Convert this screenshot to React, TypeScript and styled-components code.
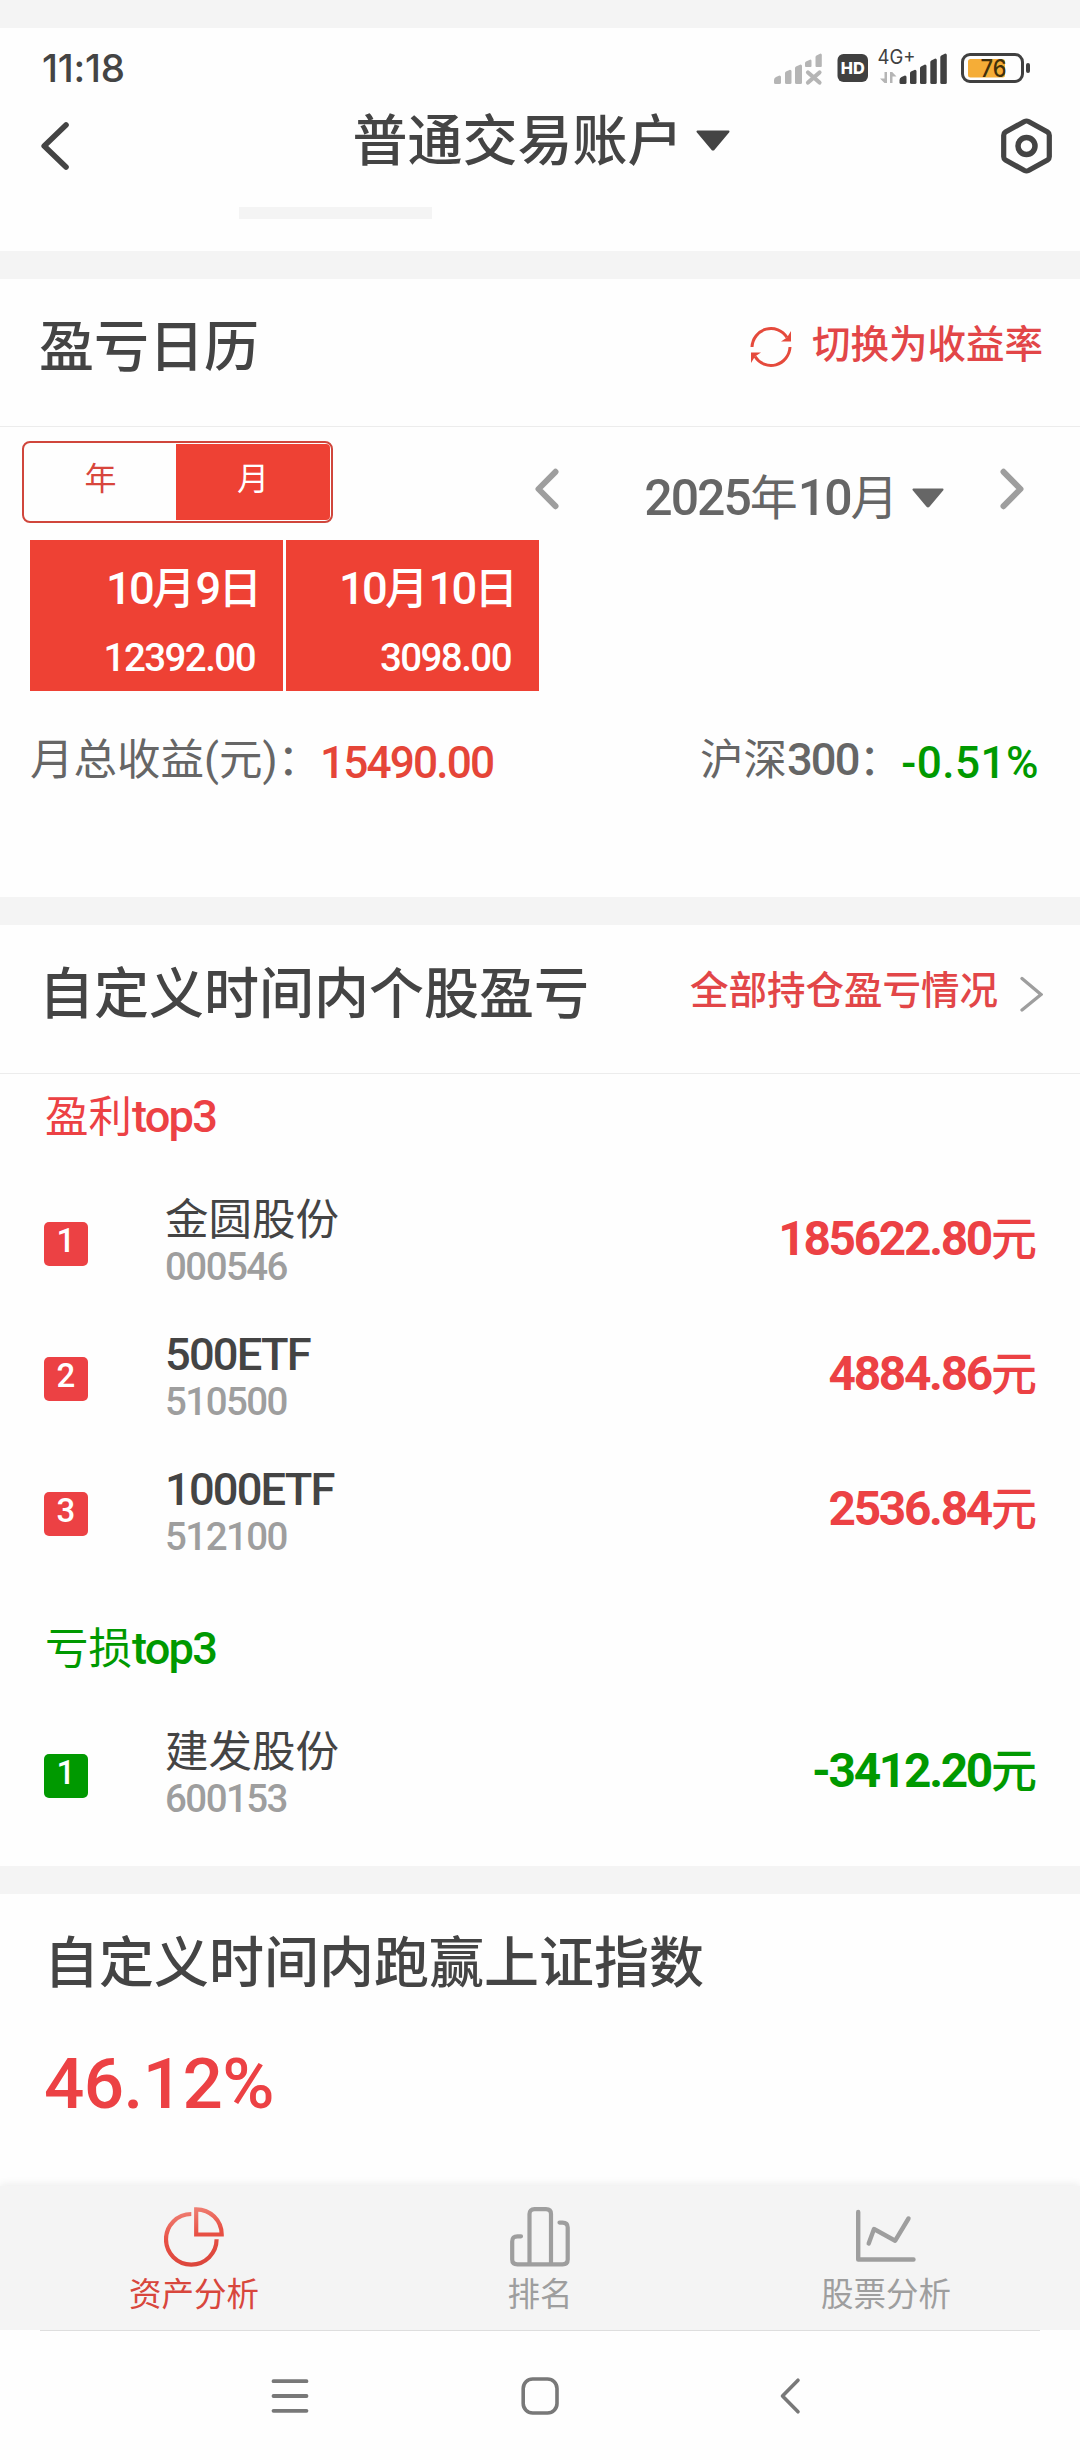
import React from "react";
import styled, { createGlobalStyle } from "styled-components";

const GlobalStyle = createGlobalStyle`
  body {
    margin: 0;
    background: #fefefe;
  }
  * {
    box-sizing: border-box;
  }
  svg {
    display: block;
    flex: none;
  }
`;

const RED = "#ec4144";
const GREEN = "#009900";
const INK = "#444444";
const GREY = "#9e9e9e";

const Page = styled.div`
  width: 1080px;
  height: 2460px;
  display: flex;
  flex-direction: column;
  overflow: hidden;
  background: #fefefe;
  color: ${INK};
  font-family: Roboto, "Noto Sans CJK SC", sans-serif;
  white-space: nowrap;
`;

const Band = styled.div`
  flex: none;
  height: 28px;
  background: #f4f4f4;
`;

const Num = styled.span<{ $weight?: number; $track?: number }>`
  font-size: 1.04em;
  line-height: 0;
  font-weight: ${(p) => p.$weight ?? 500};
  letter-spacing: ${(p) => p.$track ?? -0.04}em;
`;

/* status bar */

const StatusBar = styled.div`
  flex: none;
  height: 68px;
  display: flex;
  justify-content: space-between;
  padding: 0 50px 0 42px;
`;

const Clock = styled.div`
  margin-top: 15px;
  font-family: Inter, sans-serif;
  font-size: 38.5px;
  line-height: 50px;
  font-weight: 500;
  letter-spacing: -0.2px;
`;

const StatusIcons = styled.svg`
  margin-top: 12px;
`;

/* page header */

const Header = styled.header`
  flex: none;
  height: 155px;
`;

const HeaderRow = styled.div`
  height: 100px;
  display: flex;
  align-items: center;
  justify-content: space-between;
  padding: 0 28px 0 41px;
`;

const Account = styled.div`
  display: flex;
  align-items: center;
  gap: 13px;
  padding: 0 0 11px 12px;
  font-size: 55px;
  line-height: 70px;
  font-weight: 500;
`;

const TabHint = styled.div`
  width: 193px;
  height: 12px;
  margin: 11px 0 0 239px;
  background: #f4f4f4;
`;

/* sections */

const Section = styled.section<{ $height: number }>`
  flex: none;
  height: ${(p) => p.$height}px;
`;

const SectionHead = styled.div<{ $height: number }>`
  height: ${(p) => p.$height}px;
  display: flex;
  align-items: center;
  justify-content: space-between;
  padding: 0 37px 11px 39px;
  border-bottom: 1px solid #ececec;
`;

const SectionTitle = styled.h2`
  margin: 0;
  font-size: 55px;
  line-height: 70px;
  font-weight: 500;
`;

const HeadLink = styled.div<{ $gap: number }>`
  display: flex;
  align-items: center;
  gap: ${(p) => p.$gap}px;
  color: #e24648;
  font-size: 38.5px;
  line-height: 50px;
  font-weight: 500;
`;

const HeadLinkText = styled.span`
  margin-top: -5px;
`;

/* calendar */

const Toolbar = styled.div`
  display: flex;
  align-items: center;
  height: 82px;
  margin-top: 14px;
  padding: 0 56px 0 22px;
`;

const Toggle = styled.div`
  display: grid;
  grid-template-columns: 151px 154px;
  width: 311px;
  height: 82px;
  margin-right: 202px;
  padding: 1px;
  border: 2px solid #d0463c;
  border-radius: 8px;
`;

const ToggleItem = styled.div<{ $active?: boolean }>`
  text-align: center;
  font-size: 32px;
  line-height: 70px;
  border-radius: ${(p) => (p.$active ? "0 4px 4px 0" : "0")};
  color: ${(p) => (p.$active ? "#fff" : "#d8463c")};
  background: ${(p) => (p.$active ? "#ee4134" : "transparent")};
`;

const Stepper = styled.div`
  display: flex;
  align-items: center;
  margin-top: 14px;
`;

const Month = styled.div`
  flex: 1;
  display: flex;
  align-items: center;
  justify-content: center;
  gap: 13px;
  padding: 34px 0 0 29px;
  color: #666;
  font-size: 48px;
  line-height: 60px;

  svg {
    margin-top: -3px;
  }
`;

const Days = styled.div`
  display: grid;
  grid-template-columns: repeat(2, 253px);
  gap: 3px;
  margin: 17px 0 0 30px;
`;

const Day = styled.div`
  height: 151px;
  padding: 20px 21px 0 0;
  text-align: right;
  color: #fff;
  background: #ee4134;
`;

const DayDate = styled.div`
  font-size: 43.5px;
  line-height: 60px;
  font-weight: 500;
`;

const DayValue = styled.div`
  margin-top: 15px;
  padding-right: 7px;
  font-size: 37px;
  line-height: 48px;
`;

const Summary = styled.div`
  display: flex;
  justify-content: space-between;
  margin-top: 39px;
  padding: 0 41px 0 30px;
`;

const SummaryItem = styled.div`
  display: flex;
  color: #666;
  font-size: 43.5px;
  line-height: 62px;
`;

const SummaryValue = styled.span<{ $color: string }>`
  margin-left: -1px;
  padding-top: 3px;
  font-size: 42.5px;
  color: ${(p) => p.$color};
`;

/* ranking */

const GroupLabel = styled.div<{ $color: string; $top: number }>`
  margin: ${(p) => p.$top}px 0 29px 45px;
  color: ${(p) => p.$color};
  font-size: 43.5px;
  line-height: 60px;
`;

const StockRow = styled.div`
  display: flex;
  height: 135px;
  padding: 0 43px 0 44px;
`;

const Rank = styled.div<{ $color: string }>`
  width: 44px;
  height: 44px;
  margin-top: 45px;
  border-radius: 5px;
  background: ${(p) => p.$color};
  color: #fff;
  font-size: 33px;
  line-height: 38px;
  font-weight: 500;
  text-align: center;
`;

const Stock = styled.div`
  flex: 1;
  padding: 19px 0 0 77px;
`;

const StockName = styled.div`
  font-size: 43.5px;
  line-height: 50px;
`;

const StockCode = styled.div`
  color: ${GREY};
  font-size: 37px;
  line-height: 44px;
`;

const Amount = styled.div<{ $color: string }>`
  margin-top: 32px;
  color: ${(p) => p.$color};
  font-size: 46px;
  line-height: 60px;
  font-weight: 500;
`;

/* index comparison */

const Compare = styled.div`
  padding: 39px 0 0 44px;
`;

const CompareTitle = styled(SectionTitle)`
  line-height: 60px;
`;

const Percent = styled.div`
  margin-top: 51px;
  color: ${RED};
  font-size: 71px;
  line-height: 80px;
  font-weight: 500;
  letter-spacing: -0.6px;
`;

/* bottom bars */

const TabBar = styled.nav`
  position: relative;
  flex: none;
  display: grid;
  grid-template-columns: repeat(3, 346px);
  justify-content: center;
  height: 144px;
  padding-top: 21px;
  background: #f4f4f4;
  box-shadow: 0 -2px 8px rgba(0, 0, 0, 0.07);
`;

const Tab = styled.div<{ $color: string }>`
  display: flex;
  flex-direction: column;
  align-items: center;
  gap: 8px;
  color: ${(p) => p.$color};
  font-size: 32.5px;
  line-height: 40px;
`;

const SystemNav = styled.div`
  flex: none;
  position: relative;
  z-index: 1;
  display: flex;
  flex-direction: column;
  align-items: center;
  height: 130px;
  background: #fefefe;
`;

const Divider = styled.div`
  width: 1000px;
  height: 1px;
  background: #dedede;
`;

const SystemButtons = styled.div`
  flex: 1;
  display: flex;
  align-items: center;
  gap: 210px;
`;

const CaretDown = ({ width, height, color }: { width: number; height: number; color: string }) => (
  <svg width={width} height={height} viewBox="0 0 34 21">
    <path d="M1.5 1.5H32.500L17.800 19.200Q17 20 16.200 19.200Z" fill={color} stroke={color} strokeWidth="2" strokeLinejoin="round" />
  </svg>
);

type StockItem = { rank: number; name: React.ReactNode; code: string; amount: string };

const profits: StockItem[] = [
  { rank: 1, name: "金圆股份", code: "000546", amount: "185622.80" },
  { rank: 2, name: <Num>500ETF</Num>, code: "510500", amount: "4884.86" },
  { rank: 3, name: <Num>1000ETF</Num>, code: "512100", amount: "2536.84" },
];

const losses: StockItem[] = [{ rank: 1, name: "建发股份", code: "600153", amount: "-3412.20" }];

const StockList = ({ items, color }: { items: StockItem[]; color: string }) => (
  <>
    {items.map((s) => (
      <StockRow key={s.code}>
        <Rank $color={color}>{s.rank}</Rank>
        <Stock>
          <StockName>{s.name}</StockName>
          <StockCode>
            <Num>{s.code}</Num>
          </StockCode>
        </Stock>
        <Amount $color={color}>
          <Num $weight={700} $track={-0.048}>
            {s.amount}
          </Num>
          元
        </Amount>
      </StockRow>
    ))}
  </>
);

const StatusGlyphs = () => (
  <StatusIcons width="260" height="50" viewBox="770 40 260 50">
    <g fill="#b5b5b5">
      <path d="M774 80q0-2 2-3l3.500-1.500q1.500 0 1.500 1.500v5.500q0 1.500-1.500 1.500h-4q-1.500 0-1.500-1.500z" />
      <path d="M785 73q0-1 1-1.500l4-1.800q1.500 0 1.500 1.500v11.300q0 1.500-1.500 1.500h-3.500q-1.500 0-1.500-1.500z" />
      <path d="M795 68q0-1 1-1.500l4.500-2q1.500 0 1.500 1.500v16.500q0 1.500-1.500 1.500h-4q-1.500 0-1.500-1.500z" />
      <path d="M805 63q0-1 1-1.500l4.500-2q1 0 1 1.500v5q0 1-1 1h-4.500q-1 0-1-1z" />
      <path d="M815.500 57q0-1 1-1.500l4-2q1.300 0 1.300 1.500v11q0 1-1 1h-4.300q-1 0-1-1z" />
    </g>
    <path d="M808 72.500l11.500 10M819.500 72.500l-11.500 10" stroke="#b5b5b5" strokeWidth="4.200" strokeLinecap="round" />
    <rect x="837.500" y="54" width="30.500" height="28" rx="6" fill="#404040" />
    <text x="852.800" y="74" fontFamily="Inter, sans-serif" fontSize="16.500" fontWeight="800" fill="#fff" textAnchor="middle" textLength="24" lengthAdjust="spacingAndGlyphs">
      HD
    </text>
    <text x="877.500" y="63.700" fontFamily="Inter, sans-serif" fontSize="20" fill="#404040" textLength="38" lengthAdjust="spacingAndGlyphs">
      4G+
    </text>
    <path d="M884.500 72h2.500v11h-2.500l-4.500-4.500h4.500zM890 83v-11h2.200l4.300 4.500h-4v6.500z" fill="#b5b5b5" />
    <g fill="#404040">
      <path d="M899.500 80q0-2 2-3l3.500-1.500q1.500 0 1.500 1.500v5.500q0 1.500-1.500 1.500h-4q-1.500 0-1.500-1.500z" />
      <path d="M910 73q0-1 1-1.500l4-1.800q1.500 0 1.500 1.500v11.300q0 1.500-1.500 1.500h-3.500q-1.500 0-1.500-1.500z" />
      <path d="M920 68q0-1 1-1.500l4-2q1.500 0 1.500 1.500v16.500q0 1.500-1.500 1.500h-3.500q-1.500 0-1.500-1.500z" />
      <path d="M930.300 62q0-1 1-1.500l4-2q1.500 0 1.500 1.500v22.500q0 1.500-1.500 1.500h-3.500q-1.500 0-1.500-1.500z" />
      <path d="M940.300 57q0-1 1-1.500l4-2q1.500 0 1.500 1.500v27.500q0 1.500-1.500 1.500h-3.500q-1.500 0-1.500-1.500z" />
    </g>
    <rect x="962.500" y="54.500" width="60" height="27" rx="7.500" fill="none" stroke="#404040" strokeWidth="3" />
    <rect x="968" y="59" width="37" height="18.500" rx="2.500" fill="#f5ad37" />
    <rect x="1026" y="63" width="4" height="10" rx="2" fill="#404040" />
    <text x="980.500" y="76.800" fontFamily="Inter, sans-serif" fontSize="24" fontWeight="500" fill="#40300c" textLength="26" lengthAdjust="spacingAndGlyphs">
      76
    </text>
  </StatusIcons>
);

export default function App() {
  return (
    <Page>
      <GlobalStyle />
      <Band />
      <StatusBar>
        <Clock>11:18</Clock>
        <StatusGlyphs />
      </StatusBar>
      <Header>
        <HeaderRow>
          <svg width="28" height="48" viewBox="0 0 28 48" fill="none" stroke={INK} strokeWidth="5.600" strokeLinecap="round" strokeLinejoin="round">
            <path d="M25 3L3.200 24l21.800 21" />
          </svg>
          <Account>
            普通交易账户
            <CaretDown width={34} height={21} color={INK} />
          </Account>
          <svg width="51" height="56" viewBox="0 0 51 56" fill="none" stroke={INK} strokeWidth="5.200">
            <path d="M23.500 3.500q2-1 4 0l19 10.500q1.800 1.200 1.800 3.300v21.400q0 2.100-1.800 3.300l-19 10.500q-2 1-4 0l-19-10.500q-1.800-1.200-1.800-3.300V17.300q0-2.100 1.800-3.300z" />
            <circle cx="25.500" cy="28" r="8.500" strokeWidth="5.500" />
          </svg>
        </HeaderRow>
        <TabHint />
      </Header>
      <Band />

      <Section $height={618}>
        <SectionHead $height={148}>
          <SectionTitle>盈亏日历</SectionTitle>
          <HeadLink $gap={20}>
            <svg width="42" height="44" viewBox="0 0 42 44" fill="none" stroke="#e54a3c" strokeWidth="3">
              <path d="M2 22A19 19.500 0 0 1 37 12.500M40 22A19 19.500 0 0 1 5 31.500" />
              <path d="M41 6v10.500H31l6-4zM1 38V27.500H11l-6 4z" fill="#e54a3c" stroke="none" />
            </svg>
            <HeadLinkText>切换为收益率</HeadLinkText>
          </HeadLink>
        </SectionHead>
        <Toolbar>
          <Toggle>
            <ToggleItem>年</ToggleItem>
            <ToggleItem $active>月</ToggleItem>
          </Toggle>
          <Stepper>
            <svg width="24" height="42" viewBox="0 0 24 42" fill="none" stroke={GREY} strokeWidth="6" strokeLinecap="round" strokeLinejoin="round">
              <path d="M20.500 3.800L3.500 21l17 17.200" />
            </svg>
          </Stepper>
          <Month>
            <span>
              <Num>2025</Num>年<Num>10</Num>月
            </span>
            <CaretDown width={32} height={20} color="#666" />
          </Month>
          <Stepper>
            <svg width="24" height="42" viewBox="0 0 24 42" fill="none" stroke={GREY} strokeWidth="6" strokeLinecap="round" strokeLinejoin="round">
              <path d="M3.500 3.800L20.500 21l-17 17.200" />
            </svg>
          </Stepper>
        </Toolbar>
        <Days>
          <Day>
            <DayDate>
              <Num $track={-0.06}>10</Num>月<Num $track={-0.06}>9</Num>日
            </DayDate>
            <DayValue>
              <Num>12392.00</Num>
            </DayValue>
          </Day>
          <Day>
            <DayDate>
              <Num $track={-0.06}>10</Num>月<Num $track={-0.06}>10</Num>日
            </DayDate>
            <DayValue>
              <Num>3098.00</Num>
            </DayValue>
          </Day>
        </Days>
        <Summary>
          <SummaryItem>
            <span>月总收益(元)：</span>
            <SummaryValue $color="#e54538">
              <Num $track={-0.042}>15490.00</Num>
            </SummaryValue>
          </SummaryItem>
          <SummaryItem>
            <span>
              沪深<Num>300</Num>：
            </span>
            <SummaryValue $color={GREEN}>
              <Num $track={0.01}>-0.51%</Num>
            </SummaryValue>
          </SummaryItem>
        </Summary>
      </Section>
      <Band />

      <Section $height={941}>
        <SectionHead $height={149}>
          <SectionTitle>自定义时间内个股盈亏</SectionTitle>
          <HeadLink $gap={22}>
            <HeadLinkText>全部持仓盈亏情况</HeadLinkText>
            <svg width="23" height="36" viewBox="0 0 23 36" fill="none" stroke={GREY} strokeWidth="3.300" strokeLinecap="round">
              <path d="M2 2.500L21 18.500L2 34" />
            </svg>
          </HeadLink>
        </SectionHead>
        <GroupLabel $color={RED} $top={14}>
          盈利<Num>top3</Num>
        </GroupLabel>
        <StockList items={profits} color={RED} />
        <GroupLabel $color={GREEN} $top={38}>
          亏损<Num>top3</Num>
        </GroupLabel>
        <StockList items={losses} color={GREEN} />
      </Section>
      <Band />

      <Section $height={292}>
        <Compare>
          <CompareTitle>自定义时间内跑赢上证指数</CompareTitle>
          <Percent>46.12%</Percent>
        </Compare>
      </Section>

      <TabBar>
        <Tab $color="#d8463c">
          <svg width="60" height="60" viewBox="0 0 60 60" fill="none" stroke="url(#pie)" strokeWidth="4.200">
            <defs>
              <linearGradient id="pie" gradientUnits="userSpaceOnUse" x1="20" y1="0" x2="32" y2="58">
                <stop offset="0" stopColor="#f08478" />
                <stop offset="0.500" stopColor="#e85044" />
                <stop offset="1" stopColor="#dc463c" />
              </linearGradient>
            </defs>
            <path d="M27.300 7A25.300 25.300 0 1 0 52.600 32.300" />
            <path d="M32.200 2.300V27.500H57.700A25.300 25.300 0 0 0 32.200 2.300Z" />
          </svg>
          资产分析
        </Tab>
        <Tab $color={GREY}>
          <svg width="60" height="60" viewBox="0 0 60 60" fill="none" stroke={GREY} strokeWidth="4.200" strokeLinecap="round">
            <path d="M11 29.300H7.500Q2.200 29.300 2.200 34.500V52.500Q2.200 57.300 7.500 57.300H52.500Q57.700 57.300 57.700 52.500V20.500Q57.700 15.600 52.500 15.600H49.500" />
            <path d="M19.500 57V7Q19.500 2.200 24.500 2.200H36Q41 2.200 41 7V57" />
          </svg>
          排名
        </Tab>
        <Tab $color={GREY}>
          <svg width="60" height="60" viewBox="0 0 60 60" fill="none" stroke={GREY} strokeWidth="4.400" strokeLinecap="round" strokeLinejoin="round">
            <path d="M2.200 5V52.500H57.500" />
            <path d="M12.700 36.500L18 22L39.200 33.700L52.500 11.500" />
          </svg>
          股票分析
        </Tab>
      </TabBar>
      <SystemNav>
        <Divider />
        <SystemButtons>
          <svg width="40" height="40" viewBox="0 0 40 40" fill="none" stroke="#787878" strokeWidth="3.800" strokeLinecap="round">
            <path d="M3.500 5.200H36.500M3.500 20H36.500M3.500 34.800H36.500" />
          </svg>
          <svg width="40" height="40" viewBox="0 0 40 40" fill="none" stroke="#787878" strokeWidth="3.600">
            <rect x="3.200" y="3" width="33.800" height="34" rx="9.500" />
          </svg>
          <svg width="40" height="40" viewBox="0 0 40 40" fill="none" stroke="#787878" strokeWidth="3.600" strokeLinecap="round" strokeLinejoin="round">
            <path d="M28 4.200L12.500 20L28 35.800" />
          </svg>
        </SystemButtons>
      </SystemNav>
    </Page>
  );
}
